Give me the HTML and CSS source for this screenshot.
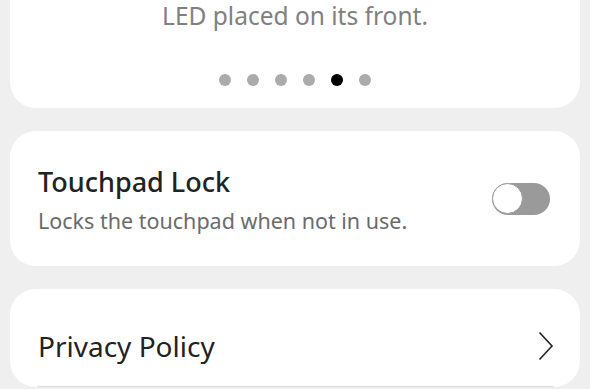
FILE: index.html
```html
<!DOCTYPE html>
<html lang="en">
<head>
    <meta charset="UTF-8">
    <meta name="viewport" content="width=device-width, initial-scale=1.0">
    <title>Settings</title>
    <link rel="stylesheet" href="styles.css">
</head>
<body>
    <div class="container">
        <div class="card intro-card">
            <p class="intro-text">LED placed on its front.</p>
            <div class="dots">
                <span class="dot"></span>
                <span class="dot"></span>
                <span class="dot"></span>
                <span class="dot"></span>
                <span class="dot active"></span>
                <span class="dot"></span>
            </div>
        </div>

        <div class="card setting-card">
            <div class="setting-text">
                <p class="setting-title">Touchpad Lock</p>
                <p class="setting-desc">Locks the touchpad when not in use.</p>
            </div>
            <div class="toggle">
                <span class="toggle-knob"></span>
            </div>
        </div>

        <div class="card link-card">
            <div class="link-row">
                <p class="link-title">Privacy Policy</p>
                <svg class="chevron" width="16" height="30" viewBox="0 0 16 30">
                    <polyline points="1.5,1.5 14,15 1.5,28.5" fill="none" stroke="#222" stroke-width="1.6"/>
                </svg>
            </div>
            <div class="divider"></div>
        </div>
    </div>
</body>
</html>
```

FILE: styles.css
```css
body {
    margin: 0;
    background-color: #efefef;
    font-family: "Noto Sans", "Open Sans", sans-serif;
    overflow: hidden;
}

p {
    margin: 0;
}

.container {
    padding: 0 10px;
}

.card {
    background-color: #fff;
    border-radius: 26px;
    margin-bottom: 23px;
}

.intro-card {
    margin-top: -30px;
    padding-top: 30px;
    padding-bottom: 22px;
    text-align: center;
}

.intro-text {
    font-size: 24.5px;
    line-height: 32px;
    color: #808080;
}

.dots {
    display: flex;
    justify-content: center;
    gap: 16px;
    margin-top: 42px;
}

.dot {
    width: 12px;
    height: 12px;
    border-radius: 50%;
    background-color: #ababab;
}

.dot.active {
    background-color: #000;
}

.setting-card {
    height: 135px;
    box-sizing: border-box;
    padding: 3px 30px 0 28px;
    display: flex;
    align-items: center;
    justify-content: space-between;
}

.setting-title {
    font-size: 27px;
    font-weight: 500;
    line-height: 34px;
    color: #222;
}

.setting-desc {
    font-size: 21.5px;
    line-height: 30px;
    margin-top: 7px;
    color: #6b6b6b;
}

.toggle {
    width: 58px;
    height: 32px;
    border-radius: 16px;
    background-color: #9a9a9a;
    position: relative;
    margin-top: -3px;
}

.toggle-knob {
    position: absolute;
    left: 0;
    top: 0;
    width: 29px;
    height: 29px;
    border-radius: 50%;
    background-color: #fff;
    border: 1.5px solid #9a9a9a;
}

.link-card {
    padding: 0 26px 0 28px;
}

.link-row {
    display: flex;
    align-items: center;
    justify-content: space-between;
    padding: 40px 0 23px;
}

.link-title {
    font-size: 28px;
    line-height: 34px;
    color: #222;
}

.divider {
    height: 1px;
    background-color: #dcdcdc;
    margin-left: -1px;
}
```
